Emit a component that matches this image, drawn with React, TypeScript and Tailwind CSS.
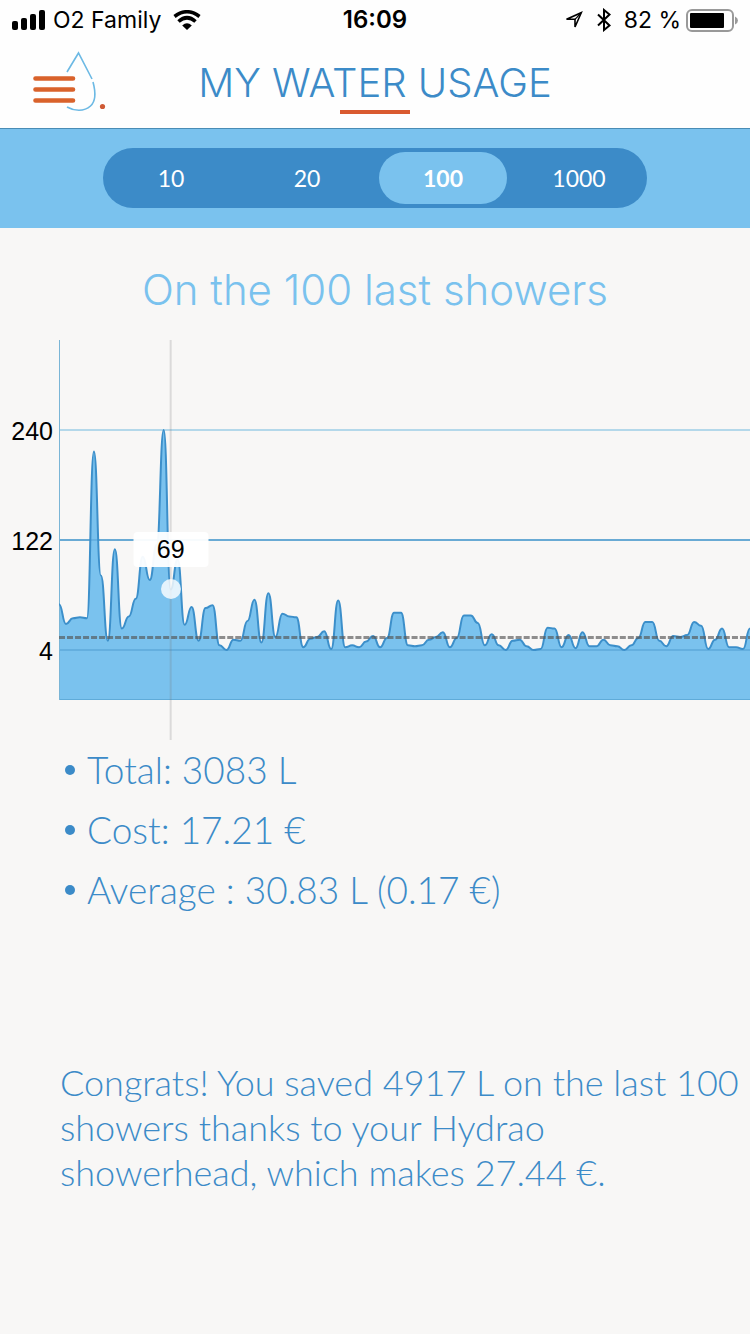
import clsx from 'clsx';
import { useMemo, useState } from 'react';

const RANGES = [10, 20, 100, 1000];

// litres used by each shower, oldest first
const SHOWERS = [
    53, 32, 38, 39, 38, 217, 84, 14, 112, 27, 40, 59, 104, 79, 117, 240, 69, 101, 31, 50, 14, 49,
    52, 9, 4, 15, 14, 35, 58, 12, 65, 18, 43, 40, 39, 7, 16, 18, 24, 5, 57, 7, 9, 7, 13, 19, 7, 17,
    44, 44, 9, 8, 9, 15, 18, 23, 7, 17, 41, 41, 33, 9, 21, 9, 4, 14, 15, 8, 4, 5, 28, 27, 7, 20, 6,
    23, 8, 8, 15, 9, 8, 4, 9, 17, 34, 34, 14, 8, 19, 18, 20, 34, 30, 5, 15, 27, 7, 7, 5, 27,
];

const PLOT_WIDTH = 690;
const PLOT_HEIGHT = 400;
const BASELINE = 360;
const SELECTED = 16;

const toX = (index: number) => (index * PLOT_WIDTH) / (SHOWERS.length - 1);
const toY = (litres: number) => 310 - ((litres - 4) * 220) / 236;

function buildLine(values: number[]) {
    return values
        .map((value, i) => {
            if (i === 0) return `M0 ${toY(value)}`;
            const middle = (toX(i - 1) + toX(i)) / 2;
            return `C${middle} ${toY(values[i - 1])} ${middle} ${toY(value)} ${toX(i)} ${toY(value)}`;
        })
        .join(' ');
}

function StatusBar() {
    return (
        <div className="flex h-10 items-center justify-between px-3 font-['Inter','Liberation_Sans',sans-serif] text-[23px] text-black">
            <div className="flex flex-1 items-center gap-2">
                <svg className="h-5 w-[33px]" viewBox="0 0 33 20">
                    <rect height="9" rx="2" width="6" x="0" y="11" />
                    <rect height="12" rx="2" width="6" x="9" y="8" />
                    <rect height="16" rx="2" width="6" x="18" y="4" />
                    <rect height="20" rx="2" width="6" x="27" y="0" />
                </svg>
                <span>O2 Family</span>
                <svg className="ml-1 h-5 w-7" fill="none" viewBox="0 0 28 20">
                    <path d="M1.5 6.5Q14 -3 26.5 6.5" stroke="black" strokeWidth="3.6" />
                    <path d="M5.500 11.500Q14 4 22.500 11.500" stroke="black" strokeWidth="3.6" />
                    <path d="M9.2 15.5Q14 11 18.8 15.5L14 20Z" fill="black" />
                </svg>
            </div>
            <span className="text-2xl font-semibold">16:09</span>
            <div className="flex flex-1 items-center justify-end">
                <svg className="mr-3 h-5 w-5" fill="none" viewBox="0 0 20 20">
                    <path
                        d="M2.500 9.300L17.300 2.700L11 17V9.300Z"
                        stroke="black"
                        strokeWidth="1.6"
                    />
                    <path d="M17 3L11 9.300" stroke="black" strokeWidth="1.2" />
                </svg>
                <svg className="mr-3 h-6 w-4" fill="none" viewBox="0 0 16 24">
                    <path
                        d="M2 6.5L13.5 17.5L8 22V2L13.5 6.5L2 17.5"
                        stroke="black"
                        strokeWidth="2"
                    />
                </svg>
                <span className="mr-1">82 %</span>
                <svg className="h-6 w-[53px]" viewBox="0 0 53 24">
                    <rect
                        fill="none"
                        height="21"
                        rx="5"
                        stroke="#999"
                        strokeWidth="2"
                        width="46"
                        x="2"
                        y="2"
                    />
                    <rect height="15" rx="1" width="34" x="5" y="5" />
                    <path d="M50 8.5Q53 10 53 12.5Q53 15 50 16.5Z" fill="#999" />
                </svg>
            </div>
        </div>
    );
}

function Header() {
    return (
        <header className="grid h-[88px] grid-cols-[106px_1fr_106px] items-start">
            <button aria-label="Menu" className="pt-[10px] pl-8" type="button">
                <svg className="h-[62px] w-[74px]" fill="none" viewBox="0 0 74 62">
                    <g stroke="#6cb9e4" strokeWidth="1.6">
                        <path d="M35 22L46.5 3L60 29" />
                        <path d="M61 32C64 43 64 51 58.5 56C52 62 42 61 35 57" />
                    </g>
                    <g stroke="#d9622b" strokeLinecap="round" strokeWidth="4.6">
                        <path d="M3.5 28.5H41M3.5 39.5H41M3.5 50.5H41" />
                    </g>
                    <circle cx="70.5" cy="56.5" fill="#cf5a35" r="2.6" />
                </svg>
            </button>
            <div className="flex flex-col items-center pt-4">
                <h1 className="font-['Inter','Liberation_Sans',sans-serif] text-[40px] leading-[54px] font-light text-[#3c8bc8]">
                    MY WATER USAGE
                </h1>
                <div className="h-1 w-[70px] bg-[#d95a30]" />
            </div>
        </header>
    );
}

function UsageChart() {
    const line = useMemo(() => buildLine(SHOWERS), []);

    return (
        <div className="flex h-[400px]">
            <div className="flex w-[59px] flex-col items-end pt-[71px] pr-[6px] font-['Liberation_Sans',sans-serif] text-[25px] leading-10 text-black">
                <span className="h-[110px]">240</span>
                <span className="h-[110px]">122</span>
                <span>4</span>
            </div>
            <div className="relative flex-1">
                <svg
                    className="h-full w-full"
                    fill="none"
                    preserveAspectRatio="none"
                    viewBox={`0 0 ${PLOT_WIDTH} ${PLOT_HEIGHT}`}
                >
                    <path d="M0 90H690" stroke="#b4d8ea" strokeWidth="2" />
                    <path d="M0 200H690" stroke="#7db8da" strokeWidth="2" />
                    <path d={`${line}V${BASELINE}H0Z`} fill="#7ac2ee" />
                    <path d="M0 200H690" stroke="#3c8bc8" strokeOpacity="0.3" strokeWidth="2" />
                    <path d="M0 310H690" stroke="#64afdf" strokeWidth="2" />
                    <path d="M0 359.5H690" stroke="#5fabd9" />
                    <path d="M0.5 0V360" stroke="#7ab5d6" />
                    <path d={line} stroke="#3c8fca" strokeWidth="2" />
                    <path
                        d="M0 297.5H690"
                        stroke="#555"
                        strokeDasharray="6 2"
                        strokeOpacity="0.65"
                        strokeWidth="3"
                    />
                    <path
                        d={`M${toX(SELECTED)} 0V${PLOT_HEIGHT}`}
                        stroke="#777"
                        strokeOpacity="0.22"
                        strokeWidth="2"
                    />
                </svg>
                <div
                    className="absolute h-5 w-5 -translate-x-1/2 -translate-y-1/2 rounded-full bg-white/80"
                    style={{
                        left: `${(toX(SELECTED) / PLOT_WIDTH) * 100}%`,
                        top: toY(SHOWERS[SELECTED]),
                    }}
                />
                <div
                    className="absolute top-48 flex h-[35px] w-[75px] -translate-x-1/2 items-center justify-center rounded bg-white/95 font-['Liberation_Sans',sans-serif] text-[25px] text-black"
                    style={{ left: `${(toX(SELECTED) / PLOT_WIDTH) * 100}%` }}
                >
                    {SHOWERS[SELECTED]}
                </div>
            </div>
        </div>
    );
}

export default function App() {
    const [range, setRange] = useState(100);

    return (
        <div className="min-h-screen bg-[#f8f7f6] font-['Lato',sans-serif]">
            <div className="bg-[#fefefe]">
                <StatusBar />
                <Header />
            </div>
            <div className="flex h-[100px] items-center justify-center bg-[#7ac2ee] shadow-[inset_0_1px_#4a8cb5]">
                <div className="grid h-[60px] w-[544px] grid-cols-4 rounded-[30px] bg-[#3c8bc8] py-1">
                    {RANGES.map((value) => (
                        <button
                            aria-pressed={range === value}
                            className={clsx(
                                'mx-1 rounded-[26px] text-[23px] text-white',
                                range === value && 'bg-[#7ac2ee] font-bold',
                            )}
                            key={value}
                            onClick={() => {
                                setRange(value);
                            }}
                            type="button"
                        >
                            {value}
                        </button>
                    ))}
                </div>
            </div>
            <main>
                <h2 className="pt-[38px] pb-[26px] text-center font-['Inter','Liberation_Sans',sans-serif] text-[42px] leading-[48px] font-light text-[#7ac2ee]">
                    On the {range} last showers
                </h2>
                <UsageChart />
                <ul className="pl-[65px] text-[37px] leading-[60px] font-light text-[#3c8bc8]">
                    {['Total: 3083 L', 'Cost: 17.21 €', 'Average : 30.83 L (0.17 €)'].map((item) => (
                        <li className="flex items-center gap-3" key={item}>
                            <span className="h-[10px] w-[10px] rounded-full bg-[#3c8bc8]" />
                            {item}
                        </li>
                    ))}
                </ul>
                <p className="mt-[140px] pr-1 pl-[60px] text-[36px] leading-[45px] font-light text-[#3c8bc8]">
                    Congrats! You saved 4917 L on the last 100 showers thanks to your Hydrao
                    showerhead, which makes 27.44 €.
                </p>
            </main>
        </div>
    );
}
